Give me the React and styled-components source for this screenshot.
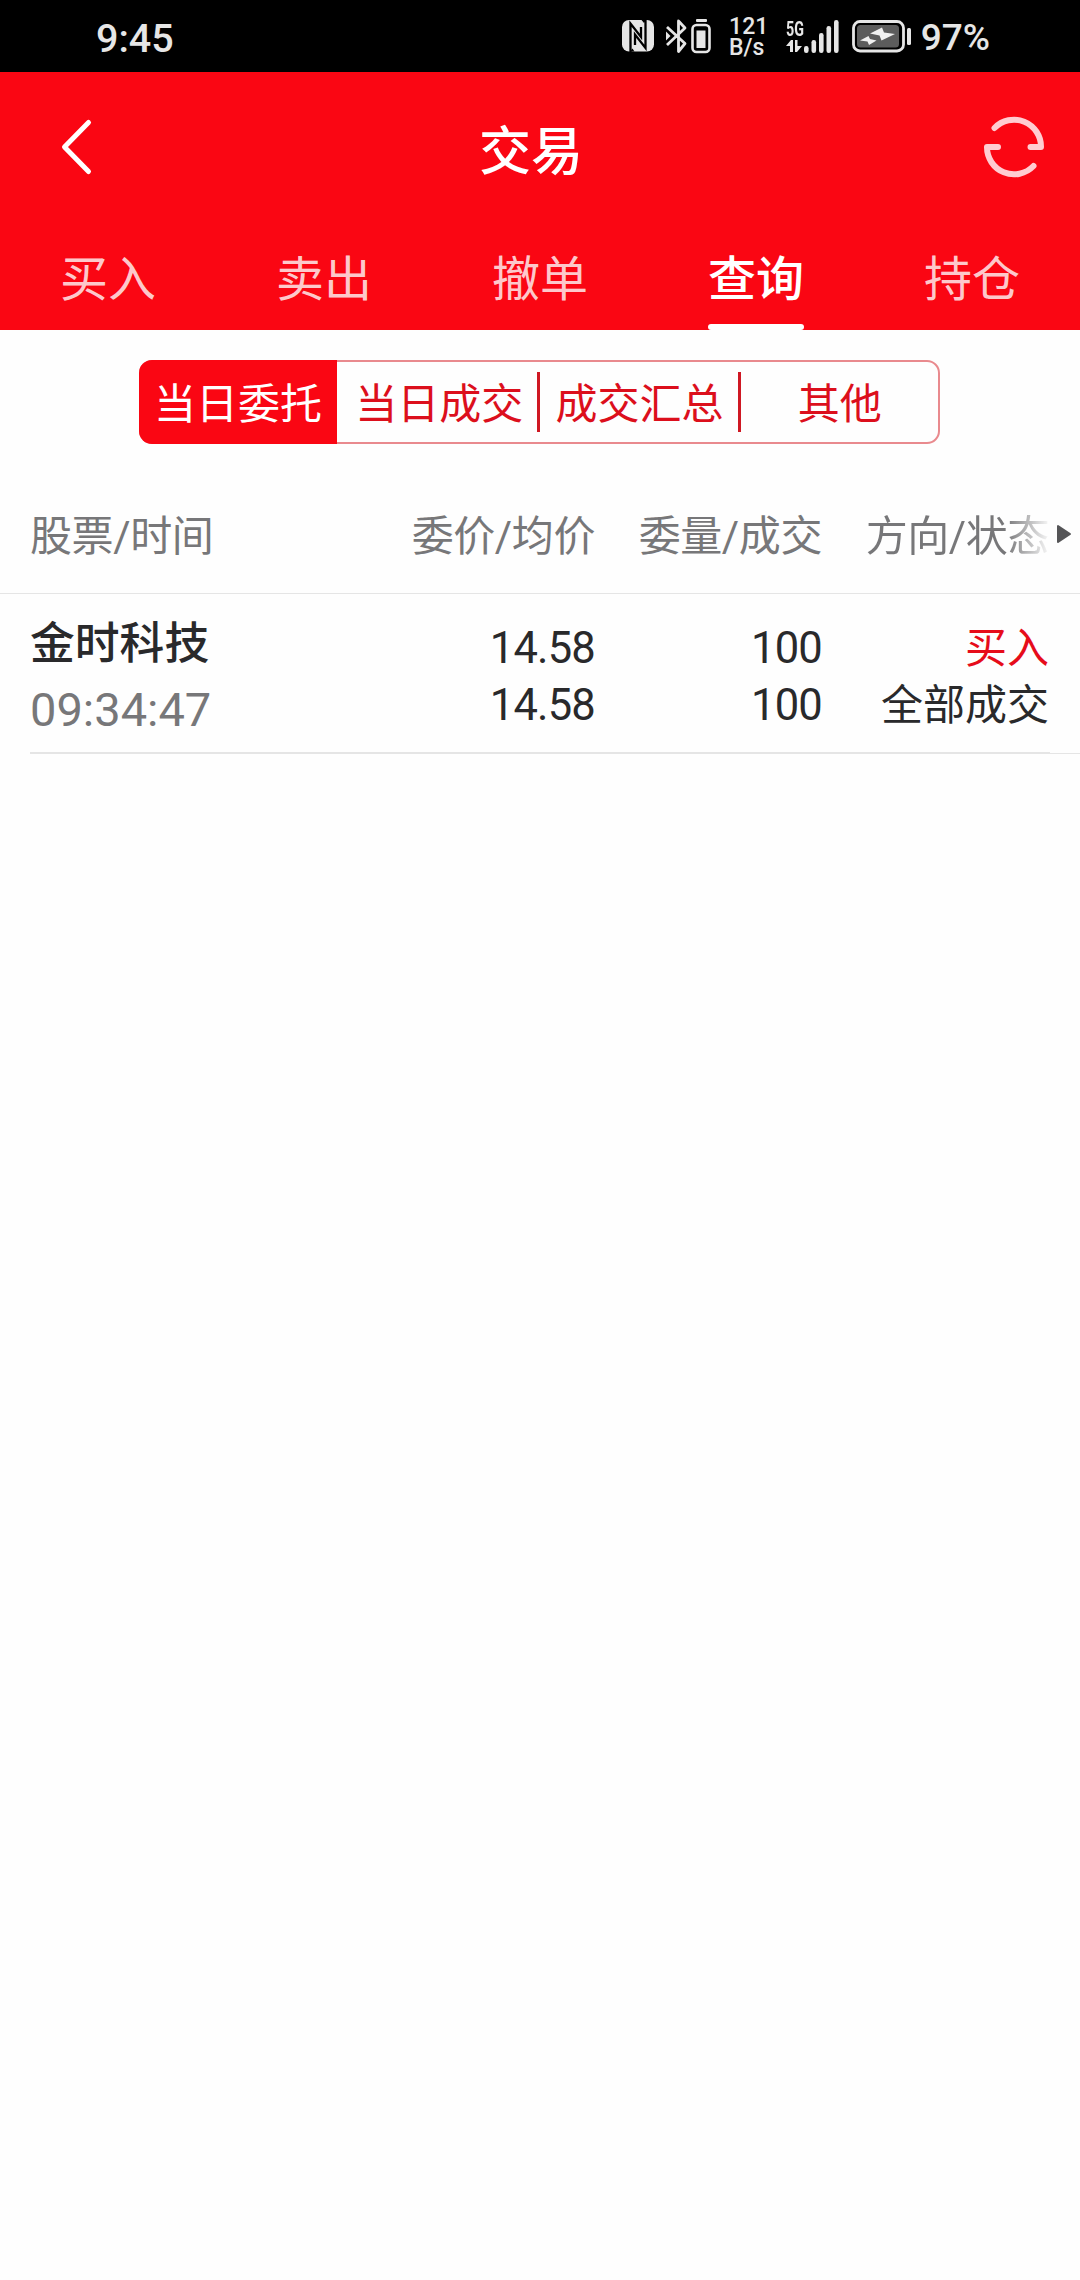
import React from "react";
import styled, { createGlobalStyle, css } from "styled-components";

const GlobalStyle = createGlobalStyle`
  body {
    margin: 0;
    background: #fefefe;
    font-family: Roboto, "Noto Sans CJK SC", sans-serif;
    color: #29292b;
  }
`;

const Screen = styled.div`
  width: 1080px;
  min-height: 2280px;
  background: #fefefe;
`;

const StatusBar = styled.div`
  display: flex;
  align-items: center;
  justify-content: space-between;
  box-sizing: border-box;
  height: 72px;
  padding: 0 90px 0 96px;
  background: #000;
  color: #e6e6e6;
`;

const Clock = styled.span`
  padding-top: 5px;
  font-size: 39.5px;
  font-weight: 500;
  line-height: 48px;
`;

const StatusIcons = styled.div`
  display: flex;
  align-items: center;

  svg {
    display: block;
    flex: none;
  }
`;

const NetSpeed = styled.div`
  display: flex;
  flex-direction: column;
  width: 38px;
  padding-top: 2px;
  margin: 0 18px 0 19px;
  align-items: center;
  font-size: 23px;
  font-weight: 500;
  line-height: 21px;
`;

const Signal = styled.div`
  display: flex;
  align-items: flex-end;
  margin-right: 13px;
`;

const NetworkType = styled.div`
  width: 18px;

  span {
    display: block;
    font-size: 21px;
    font-weight: 700;
    line-height: 18px;
    transform: scaleX(0.68);
    transform-origin: left;
  }

  svg {
    margin-top: 2px;
  }
`;

const Percent = styled.span`
  padding-top: 4px;
  margin-left: 9px;
  font-size: 37px;
  font-weight: 500;
  line-height: 48px;
`;

const Header = styled.header`
  background: #fa0613;
  color: #fff;
`;

const TitleBar = styled.div`
  display: flex;
  align-items: center;
  justify-content: space-between;
  box-sizing: border-box;
  height: 156px;
  padding: 0 34px 6px 60px;

  svg {
    display: block;
  }
`;

const Title = styled.h1`
  margin: 12px 16px 0 0;
  font-size: 52px;
  font-weight: 500;
  line-height: 60px;
`;

const Tabs = styled.nav`
  display: grid;
  grid-template-columns: repeat(5, 1fr);
  height: 102px;
`;

const Tab = styled.div`
  display: flex;
  flex-direction: column;
  align-items: center;
  justify-content: space-between;
  padding-top: 22px;
  font-size: 48px;
  line-height: 60px;
  color: rgba(255, 255, 255, 0.8);

  ${props =>
    props.$active &&
    css`
      color: #fff;
      font-weight: 500;

      &::after {
        content: "";
        width: 96px;
        height: 6px;
        border-radius: 3px;
        background: #fff;
      }
    `}
`;

const Segments = styled.div`
  display: flex;
  box-sizing: border-box;
  width: 801px;
  height: 84px;
  margin: 30px 0 0 139px;
  border: 2px solid #e98a8e;
  border-radius: 13px;
`;

const Segment = styled.div`
  display: flex;
  align-items: center;
  justify-content: center;
  flex: 1;
  padding-top: 6px;
  font-size: 42px;
  line-height: 60px;
  color: #dc0f1c;

  &:last-child {
    margin-right: -2px;
  }

  ${props =>
    props.$active &&
    css`
      flex: 0 0 198px;
      margin: -2px 2px -2px -2px;
      border-radius: 13px 0 0 13px;
      background: #fa0613;
      color: #fff;
    `}
`;

const Divider = styled.i`
  width: 3px;
  height: 60px;
  margin: 10px -1px 0 -2px;
  background: #cf1823;
`;

const Row = styled.div`
  display: grid;
  grid-template-columns: 347px 218px 227px 227px;
  padding-left: 30px;
`;

const HeadRow = styled(Row)`
  grid-template-columns: 347px 218px 227px 227px 1fr;
  align-items: center;
  box-sizing: border-box;
  height: 150px;
  padding-top: 37px;
  border-bottom: 1px solid #e5e5e5;
  font-size: 42px;
  letter-spacing: -0.4px;
  line-height: 60px;
  color: #777779;
`;

const HeadCell = styled.span`
  text-align: ${props => (props.$left ? "left" : "right")};
`;

const FadedCell = styled(HeadCell)`
  background: linear-gradient(to right, #777779 184px, rgba(119, 119, 121, 0.05) 227px);
  background-clip: text;
  color: transparent;
`;

const More = styled.svg`
  display: block;
  margin: -6px 0 0 8px;
`;

const OrderRow = styled(Row)`
  box-sizing: border-box;
  height: 158px;
  padding-top: 17px;
`;

const Cell = styled.div`
  padding-top: 9px;
  text-align: right;
  font-size: 42px;
  line-height: 57px;
  white-space: nowrap;
`;

const StockCell = styled(Cell)`
  padding-top: 0;
  text-align: left;
`;

const StockName = styled.div`
  font-size: 44.8px;
  font-weight: 500;
  line-height: 66px;
`;

const OrderTime = styled.div`
  font-size: 47px;
  line-height: 65px;
  color: #777779;
`;

const Figure = styled.div`
  font-size: 43.5px;
  letter-spacing: -0.8px;
`;

const Side = styled.div`
  color: #e60c1a;
`;

const RowLine = styled.div`
  display: flex;
  align-items: flex-end;
  height: 2px;
  margin-left: 30px;

  &::before {
    content: "";
    width: 1020px;
    height: 2px;
    background: #e5e5e5;
  }

  &::after {
    content: "";
    flex: 1;
    height: 1px;
    background: #e5e5e5;
  }
`;

const NfcIcon = styled(({ className }) => (
  <svg className={className} width="32" height="32" viewBox="0 0 32 32">
    <rect width="32" height="31.5" rx="7" fill="#e6e6e6" />
    <path
      d="M8.500 32V3.500L19 17V7M23.500 0v28L13 14.500V25"
      fill="none"
      stroke="#000"
      strokeWidth="2.300"
    />
    <path d="M8 31.500h4.500l-2-3zM19.500 0H24l-2 3z" fill="#000" />
  </svg>
))`
  margin-right: 12px;
`;

const BluetoothIcon = styled(({ className }) => (
  <svg className={className} width="22" height="36" viewBox="0 0 22 36">
    <path
      d="M1 9l18 16.500-6.500 8V3l6.500 7L1 27"
      fill="none"
      stroke="#e6e6e6"
      strokeWidth="2.800"
      strokeLinejoin="round"
    />
    <path d="M0 13.500l4.500 4.500L0 22.500z" fill="#e6e6e6" />
  </svg>
))`
  margin-right: 3px;
`;

const DeviceBatteryIcon = () => (
  <svg width="20" height="36" viewBox="0 0 20 36">
    <rect x="5" y="1" width="11" height="3" rx="1" fill="#e6e6e6" />
    <rect x="1.500" y="7" width="17" height="27" rx="4" fill="none" stroke="#e6e6e6" strokeWidth="2.600" />
    <rect x="5.500" y="12.500" width="9" height="17.500" fill="#e6e6e6" />
  </svg>
);

const DataArrows = () => (
  <svg width="18" height="13" viewBox="0 0 18 13">
    <path d="M0 6l5-6h2v12H4V6zM9 0h2.500v6H16l-5 6H9z" fill="#e6e6e6" />
  </svg>
);

const SignalBars = () => (
  <svg width="35" height="34" viewBox="0 0 35 34">
    {[7, 13, 20, 27, 33].map((height, i) => (
      <rect
        key={height}
        x={i * 7.5}
        y={34 - height}
        width="4.600"
        height={height}
        rx="2.200"
        fill="#e6e6e6"
      />
    ))}
  </svg>
);

const ChargingIcon = () => (
  <svg width="60" height="34" viewBox="0 0 60 34">
    <rect x="1.500" y="2.500" width="50" height="29.500" rx="6.500" fill="none" stroke="#e6e6e6" strokeWidth="2.800" />
    <rect x="5" y="6" width="42" height="22.500" rx="3.500" fill="#5c5c5c" />
    <path
      d="M18 14.500L30 8.500l2 5 11 1.500-13.500 6.500-2-5zM8 21.500l8.500-4.500 1.500 3 6.500 1.500-7.500 4.500-1.500-3.500z"
      fill="#f0f0f0"
    />
    <rect x="55" y="9" width="4" height="17" rx="1.500" fill="#e6e6e6" />
  </svg>
);

const BackIcon = () => (
  <svg width="36" height="60" viewBox="0 0 36 60">
    <path
      d="M28.500 5.500L4.500 30l24 24.500"
      fill="none"
      stroke="#fff"
      strokeWidth="5"
      strokeLinecap="round"
      strokeLinejoin="round"
    />
  </svg>
);

const RefreshIcon = () => (
  <svg width="64" height="64" viewBox="0 0 64 64">
    <path
      d="M12.500 13A27 27 0 0 1 59 32H48.500M16 32H5A27 27 0 0 0 51.500 51"
      fill="none"
      stroke="#ffccd1"
      strokeWidth="6"
      strokeLinecap="round"
      strokeLinejoin="round"
    />
  </svg>
);

const tabs = ["买入", "卖出", "撤单", "查询", "持仓"];
const segments = ["当日委托", "当日成交", "成交汇总", "其他"];

const orders = [
  {
    name: "金时科技",
    time: "09:34:47",
    price: "14.58",
    average: "14.58",
    amount: "100",
    filled: "100",
    side: "买入",
    status: "全部成交"
  }
];

const App = () => (
  <>
    <GlobalStyle />
    <Screen>
      <StatusBar>
        <Clock>9:45</Clock>
        <StatusIcons>
          <NfcIcon />
          <BluetoothIcon />
          <DeviceBatteryIcon />
          <NetSpeed>
            121
            <br />
            B/s
          </NetSpeed>
          <Signal>
            <NetworkType>
              <span>5G</span>
              <DataArrows />
            </NetworkType>
            <SignalBars />
          </Signal>
          <ChargingIcon />
          <Percent>97%</Percent>
        </StatusIcons>
      </StatusBar>

      <Header>
        <TitleBar>
          <BackIcon />
          <Title>交易</Title>
          <RefreshIcon />
        </TitleBar>
        <Tabs>
          {tabs.map(tab => (
            <Tab key={tab} $active={tab === "查询"}>
              {tab}
            </Tab>
          ))}
        </Tabs>
      </Header>

      <Segments>
        {segments.map((segment, i) => (
          <React.Fragment key={segment}>
            {i > 1 && <Divider />}
            <Segment $active={i === 0}>{segment}</Segment>
          </React.Fragment>
        ))}
      </Segments>

      <HeadRow>
        <HeadCell $left>股票/时间</HeadCell>
        <HeadCell>委价/均价</HeadCell>
        <HeadCell>委量/成交</HeadCell>
        <FadedCell>方向/状态</FadedCell>
        <More width="15" height="20" viewBox="0 0 15 20">
          <path d="M1 2v16l12-8z" fill="#555557" stroke="#555557" strokeWidth="2" strokeLinejoin="round" />
        </More>
      </HeadRow>

      {orders.map(order => (
        <React.Fragment key={order.time}>
          <OrderRow>
            <StockCell>
              <StockName>{order.name}</StockName>
              <OrderTime>{order.time}</OrderTime>
            </StockCell>
            <Cell>
              <Figure>{order.price}</Figure>
              <Figure>{order.average}</Figure>
            </Cell>
            <Cell>
              <Figure>{order.amount}</Figure>
              <Figure>{order.filled}</Figure>
            </Cell>
            <Cell>
              <Side>{order.side}</Side>
              <div>{order.status}</div>
            </Cell>
          </OrderRow>
          <RowLine />
        </React.Fragment>
      ))}
    </Screen>
  </>
);

export default App;
